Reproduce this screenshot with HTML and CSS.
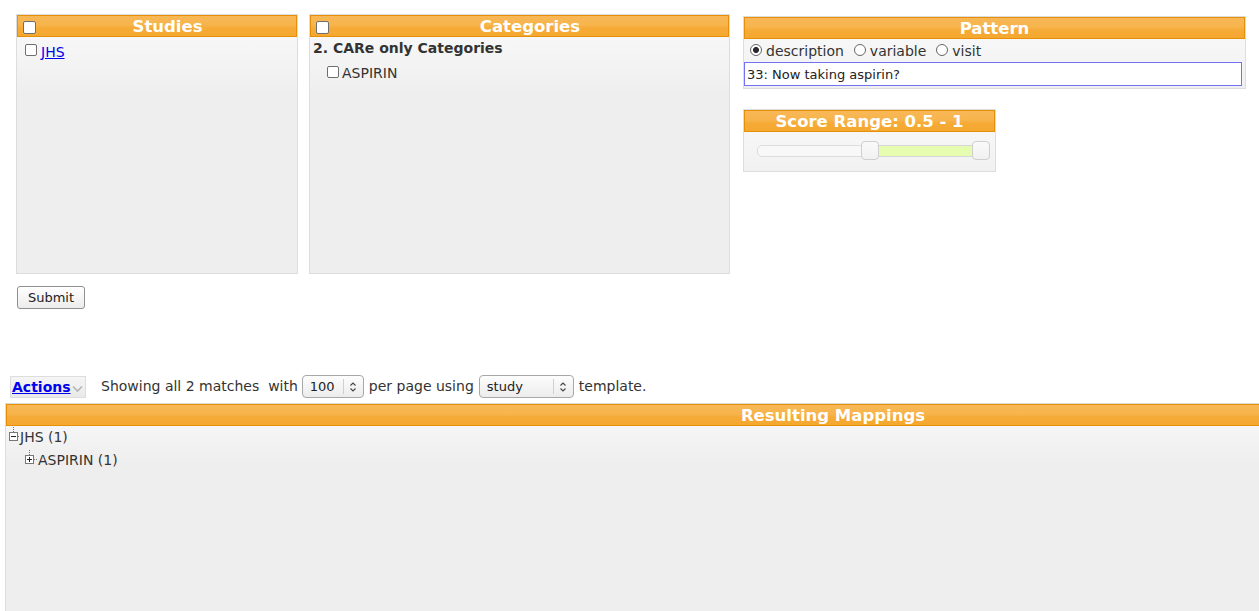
FILE: index.html
```html
<!DOCTYPE html>
<html>
<head>
<meta charset="utf-8">
<link rel="stylesheet" href="styles.css">
</head>
<body>
<div class="top">
  <div class="panel studies">
    <div class="hdr"><input type="checkbox" class="cb hcb"><span class="ht">Studies</span></div>
    <div class="studyrow"><input type="checkbox" class="cb"><a href="#" class="lnk">JHS</a></div>
  </div>
  <div class="panel categories">
    <div class="hdr"><input type="checkbox" class="cb hcb"><span class="ht">Categories</span></div>
    <div class="grp">2. CARe only Categories</div>
    <div class="catrow"><input type="checkbox" class="cb"><span>ASPIRIN</span></div>
  </div>
  <div class="right">
    <div class="panel pattern">
      <div class="hdr center">Pattern</div>
      <div class="radios">
        <label class="rl"><input type="radio" name="p" class="rb" checked><span>description</span></label>
        <label class="rl"><input type="radio" name="p" class="rb"><span>variable</span></label>
        <label class="rl"><input type="radio" name="p" class="rb"><span>visit</span></label>
      </div>
      <input type="text" class="pinput" value="33: Now taking aspirin?">
    </div>
    <div class="panel score">
      <div class="hdr center">Score Range: 0.5 - 1</div>
      <div class="track">
        <div class="range"></div>
        <div class="handle h1"></div>
        <div class="handle h2"></div>
      </div>
    </div>
  </div>
</div>
<button class="submit">Submit</button>
<div class="toolbar">
  <div class="actions"><a href="#" class="alnk">Actions</a><svg class="dd" width="11" height="8" viewBox="0 0 11 8"><path d="M1 1.5 L5.5 6 L10 1.5" fill="none" stroke="#b5b5b5" stroke-width="1.6"/></svg></div>
  <span class="show">Showing all 2 matches&nbsp; with</span>
  <div class="sel s100"><span class="sv">100</span><span class="div"></span><svg class="arr" width="8" height="12" viewBox="0 0 8 12"><path d="M1.5 4.5 L4 2 L6.5 4.5 M1.5 7.5 L4 10 L6.5 7.5" fill="none" stroke="#444" stroke-width="1.1"/></svg></div>
  <span class="mid">per page using</span>
  <div class="sel sstudy"><span class="sv">study</span><span class="div"></span><svg class="arr" width="8" height="12" viewBox="0 0 8 12"><path d="M1.5 4.5 L4 2 L6.5 4.5 M1.5 7.5 L4 10 L6.5 7.5" fill="none" stroke="#444" stroke-width="1.1"/></svg></div>
  <span class="end">template.</span>
</div>
<div class="results">
  <div class="hdr rhdr">Resulting Mappings</div>
  <div class="tree">
    <div class="node"><svg class="ti" width="11" height="20" viewBox="0 0 11 20"><path d="M4.5 0 V5" stroke="#777" stroke-dasharray="1 1" fill="none"/><rect x="0.5" y="5.5" width="8" height="8" fill="#fff" stroke="#777"/><path d="M2 9.5 H7" stroke="#222"/><path d="M9 9.5 H11" stroke="#777" stroke-dasharray="1 1"/></svg><span>JHS (1)</span></div>
    <div class="node child"><svg class="ti" width="13" height="20" viewBox="0 0 13 20"><path d="M4.5 0 V5" stroke="#777" stroke-dasharray="1 1" fill="none"/><rect x="0.5" y="5.5" width="8" height="8" fill="#fff" stroke="#777"/><path d="M2 9.5 H7 M4.5 7 V12" stroke="#222"/><path d="M9 9.5 H13" stroke="#777" stroke-dasharray="1 1"/></svg><span>ASPIRIN (1)</span></div>
  </div>
</div>
</body>
</html>
```

FILE: styles.css
```css
html, body {
  overflow: hidden;
}
body {
  margin: 0;
  font-family: "DejaVu Sans", sans-serif;
  font-size: 14px;
  color: #333;
  background: #fff;
}
.top {
  display: flex;
  align-items: flex-start;
  padding: 14px 0 0 16px;
}
.panel {
  border: 1px solid #dddddd;
  background: linear-gradient(#f8f8f8 0, #f6f6f6 30px, #eeeeee 80px);
  box-sizing: border-box;
}
.studies {
  width: 282px;
  height: 260px;
}
.categories {
  width: 421px;
  height: 260px;
  margin-left: 11px;
}
.right {
  margin-left: 13px;
  margin-top: 2px;
  display: flex;
  flex-direction: column;
  align-items: flex-start;
}
.pattern {
  width: 503px;
  height: 73px;
}
.score {
  width: 253px;
  height: 63px;
  margin-top: 20px;
}
.hdr {
  border: 1px solid #e78f08;
  background: linear-gradient(#f8b857 0%, #f7b44c 45%, #f6ab37 60%, #f5a82f 100%);
  color: #fff;
  font-weight: bold;
  font-size: 16.5px;
  line-height: 18px;
  height: 18px;
  padding-top: 2px;
  display: flex;
  align-items: center;
  white-space: nowrap;
}
.hdr.center {
  justify-content: center;
}
.ht {
  flex: 1;
  text-align: center;
}
.cb {
  -webkit-appearance: none;
  appearance: none;
  width: 12px;
  height: 12px;
  border: 1px solid #6e6e6e;
  border-radius: 2px;
  background: #fff;
  margin: 0;
  box-sizing: border-box;
  flex: none;
}
.hcb {
  width: 13px;
  height: 13px;
  margin: 0 3px 0 5px;
}
.studyrow {
  display: flex;
  align-items: center;
  height: 18px;
  margin-top: 5px;
  padding-left: 8px;
  line-height: 18px;
}
.studyrow .cb {
  margin-right: 4px;
  margin-top: -3px;
}
.lnk {
  color: #0000ee;
  text-decoration: underline;
  margin-top: 2px;
}
.grp {
  font-weight: bold;
  line-height: 18px;
  padding-left: 3px;
  margin-top: 2px;
}
.catrow {
  display: flex;
  align-items: center;
  height: 18px;
  line-height: 18px;
  margin-top: 7px;
  padding-left: 17px;
}
.catrow .cb {
  margin-right: 3px;
  margin-top: -3px;
}
.radios {
  display: flex;
  align-items: center;
  height: 23px;
}
.rl {
  display: flex;
  align-items: center;
  margin-right: 4px;
}
.rb {
  -webkit-appearance: none;
  appearance: none;
  width: 12px;
  height: 12px;
  border: 1px solid #666;
  border-radius: 50%;
  background: #fff;
  margin: -2px 4px 0 6px;
  box-sizing: border-box;
}
.rb:checked {
  background: radial-gradient(circle, #2a2a2a 0, #2a2a2a 2.6px, #fff 3.4px);
}
.pinput {
  display: block;
  width: 498px;
  height: 24px;
  box-sizing: border-box;
  border: 1px solid #7272f2;
  margin: 0;
  padding: 0 2px;
  font-family: "DejaVu Sans", sans-serif;
  font-size: 13px;
  color: #222;
  background: #fff;
  outline: none;
}
.track {
  position: relative;
  width: 233px;
  height: 12px;
  box-sizing: border-box;
  margin: 13px 0 0 13px;
  border: 1px solid #dddddd;
  border-radius: 5px;
  background: #f8f8f8;
}
.range {
  position: absolute;
  left: 121px;
  width: 93px;
  top: -1px;
  height: 12px;
  box-sizing: border-box;
  border-top: 1px solid #d6d6d6;
  border-bottom: 1px solid #d6d6d6;
  background: #e6fcb1;
}
.handle {
  position: absolute;
  top: -5px;
  width: 18px;
  height: 19px;
  box-sizing: border-box;
  border: 1px solid #cfcfcf;
  border-radius: 4px;
  background: linear-gradient(#fafafa, #f1f1f1);
}
.h1 {
  left: 103px;
}
.h2 {
  left: 214px;
}
.submit {
  display: block;
  margin: 12px 0 0 17px;
  width: 68px;
  height: 23px;
  padding: 0;
  border: 1px solid #8f8f8f;
  border-radius: 3px;
  background: linear-gradient(#ffffff, #ececec);
  font-family: "DejaVu Sans", sans-serif;
  font-size: 13px;
  color: #222;
}
.toolbar {
  display: flex;
  align-items: center;
  margin-top: 66px;
  padding-left: 10px;
  height: 23px;
  font-size: 14px;
  line-height: 20px;
  white-space: nowrap;
}
.toolbar > span {
  margin-top: -1px;
}
.actions {
  display: flex;
  align-items: center;
  width: 76px;
  height: 22px;
  box-sizing: border-box;
  border: 1px solid #dddddd;
  background: linear-gradient(#f5f5f5, #e9e9e9);
  padding-left: 1px;
  margin-top: 1px;
}
.alnk {
  color: #0000ee;
  font-weight: bold;
  text-decoration: underline;
  margin-top: -1px;
}
.dd {
  margin-left: 1px;
  margin-top: 3px;
}
.show {
  margin-left: 15px;
}
.sel {
  display: flex;
  align-items: center;
  height: 23px;
  box-sizing: border-box;
  border: 1px solid #a8a8a8;
  border-radius: 4px;
  background: linear-gradient(#fdfdfd, #ececec);
  font-size: 13px;
  color: #222;
}
.sel .sv {
  flex: 1;
  padding-left: 7px;
}
.sel .div {
  width: 1px;
  height: 15px;
  background: #d0d0d0;
}
.sel .arr {
  margin: 0 6px 0 5px;
}
.s100 {
  width: 62px;
  margin-left: 4px;
}
.sstudy {
  width: 95px;
  margin-left: 5px;
}
.mid {
  margin-left: 5px;
}
.end {
  margin-left: 5px;
}
.results {
  margin: 5px 0 0 5px;
  height: 208px;
  border: 1px solid #dddddd;
  border-right: none;
  border-bottom: none;
  background: linear-gradient(#f8f8f8 0, #f6f6f6 20px, #eeeeee 60px);
}
.rhdr {
  border-right: none;
  justify-content: center;
  padding-left: 400px;
}
.tree {
  padding: 1px 0 0 3px;
}
.node {
  display: flex;
  align-items: center;
  height: 20px;
  line-height: 20px;
  font-size: 14px;
}
.node .ti {
  display: block;
  flex: none;
}
.child {
  margin-top: 3px;
  padding-left: 16px;
}
```
